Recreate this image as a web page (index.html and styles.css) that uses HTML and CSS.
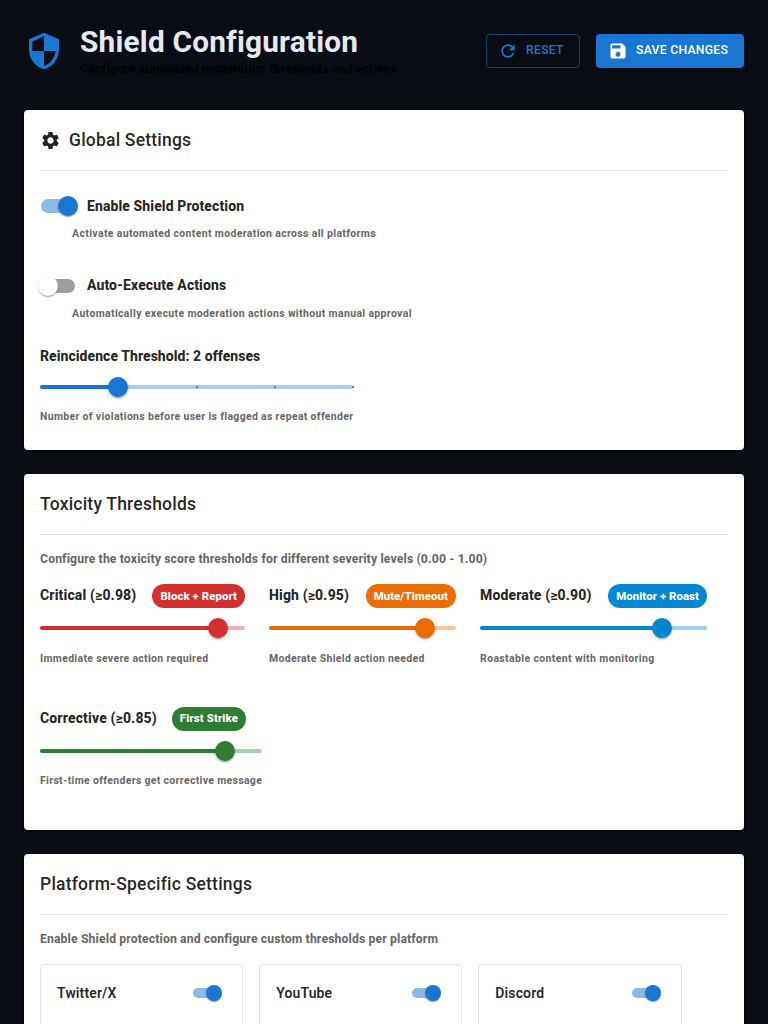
FILE: index.html
```html
<!DOCTYPE html>
<html lang="en">
<head>
<meta charset="utf-8">
<title>Shield Configuration</title>
<link rel="stylesheet" href="styles.css">
</head>
<body>
<main class="page">
  <header class="page-header">
    <div class="brand">
      <svg class="brand-icon" viewBox="0 0 24 24"><path d="M12 1 3 5v6c0 5.55 3.84 10.74 9 12 5.16-1.26 9-6.45 9-12V5l-9-4zm0 10.99h7c-.53 4.12-3.28 7.79-7 8.94V12H5V6.3l7-3.11v8.8z"/></svg>
      <div>
        <h1 class="title">Shield Configuration</h1>
        <p class="subtitle">Configure automated moderation thresholds and actions</p>
      </div>
    </div>
    <div class="actions">
      <button class="btn btn-outlined"><svg class="btn-icon" viewBox="0 0 24 24"><path d="M17.65 6.35C16.2 4.9 14.21 4 12 4c-4.42 0-7.99 3.58-7.99 8s3.57 8 7.99 8c3.73 0 6.84-2.55 7.73-6h-2.08c-.82 2.33-3.04 4-5.65 4-3.31 0-6-2.69-6-6s2.69-6 6-6c1.66 0 3.14.69 4.22 1.78L13 11h7V4l-2.35 2.35z"/></svg><span>RESET</span></button>
      <button class="btn btn-filled"><svg class="btn-icon" viewBox="0 0 24 24"><path d="M17 3H5c-1.11 0-2 .9-2 2v14c0 1.1.89 2 2 2h14c1.1 0 2-.9 2-2V7l-4-4zm-5 16c-1.66 0-3-1.34-3-3s1.34-3 3-3 3 1.34 3 3-1.34 3-3 3zm3-10H5V5h10v4z"/></svg><span>SAVE CHANGES</span></button>
    </div>
  </header>

  <section class="card card-global">
    <h2 class="card-title"><svg class="gear" viewBox="0 0 24 24"><path d="M19.14 12.94c.04-.3.06-.61.06-.94 0-.32-.02-.64-.07-.94l2.03-1.58c.18-.14.23-.41.12-.61l-1.92-3.32c-.12-.22-.37-.29-.59-.22l-2.39.96c-.5-.38-1.03-.7-1.62-.94l-.36-2.54c-.04-.24-.24-.41-.48-.41h-3.84c-.24 0-.43.17-.47.41l-.36 2.54c-.59.24-1.13.57-1.62.94l-2.39-.96c-.22-.08-.47 0-.59.22L2.74 8.87c-.12.21-.08.47.12.61l2.03 1.58c-.05.3-.09.63-.09.94s.02.64.07.94l-2.03 1.58c-.18.14-.23.41-.12.61l1.92 3.32c.12.22.37.29.59.22l2.39-.96c.5.38 1.03.7 1.62.94l.36 2.54c.05.24.24.41.48.41h3.84c.24 0 .44-.17.47-.41l.36-2.54c.59-.24 1.13-.56 1.62-.94l2.39.96c.22.08.47 0 .59-.22l1.92-3.32c.12-.22.07-.47-.12-.61l-2.01-1.58zM12 15.6c-1.98 0-3.6-1.62-3.6-3.6s1.62-3.6 3.6-3.6 3.6 1.62 3.6 3.6-1.62 3.6-3.6 3.6z"/></svg><span>Global Settings</span></h2>
    <div class="card-body">
      <div class="setting">
        <label class="switch-row"><span class="switch on"><i class="track"></i><i class="thumb"></i></span><span class="label">Enable Shield Protection</span></label>
        <p class="caption indented">Activate automated content moderation across all platforms</p>
      </div>
      <div class="setting">
        <label class="switch-row"><span class="switch"><i class="track"></i><i class="thumb"></i></span><span class="label raised">Auto-Execute Actions</span></label>
        <p class="caption indented">Automatically execute moderation actions without manual approval</p>
      </div>
      <div class="reincidence">
        <p class="label">Reincidence Threshold: 2 offenses</p>
        <div class="slider blue" style="--value: 25%"><i class="rail"></i><i class="fill"></i><i class="mark" style="left: 50%"></i><i class="mark" style="left: 75%"></i><i class="mark" style="left: 100%"></i><i class="knob"></i></div>
        <p class="caption">Number of violations before user is flagged as repeat offender</p>
      </div>
    </div>
  </section>

  <section class="card card-toxicity">
    <h2 class="card-title"><span>Toxicity Thresholds</span></h2>
    <div class="card-body">
      <p class="intro">Configure the toxicity score thresholds for different severity levels (0.00 - 1.00)</p>
      <div class="thresholds">
        <div class="threshold red critical">
          <div class="threshold-head"><span class="label">Critical (≥0.98)</span><span class="chip">Block + Report</span></div>
          <div class="slider" style="--value: 86.67%"><i class="rail"></i><i class="fill"></i><i class="knob"></i></div>
          <p class="caption">Immediate severe action required</p>
        </div>
        <div class="threshold orange high">
          <div class="threshold-head"><span class="label">High (≥0.95)</span><span class="chip">Mute/Timeout</span></div>
          <div class="slider" style="--value: 83.33%"><i class="rail"></i><i class="fill"></i><i class="knob"></i></div>
          <p class="caption">Moderate Shield action needed</p>
        </div>
        <div class="threshold sky moderate">
          <div class="threshold-head"><span class="label">Moderate (≥0.90)</span><span class="chip">Monitor + Roast</span></div>
          <div class="slider" style="--value: 80%"><i class="rail"></i><i class="fill"></i><i class="knob"></i></div>
          <p class="caption">Roastable content with monitoring</p>
        </div>
        <div class="threshold green corrective">
          <div class="threshold-head"><span class="label">Corrective (≥0.85)</span><span class="chip">First Strike</span></div>
          <div class="slider" style="--value: 83.33%"><i class="rail"></i><i class="fill"></i><i class="knob"></i></div>
          <p class="caption">First-time offenders get corrective message</p>
        </div>
      </div>
    </div>
  </section>

  <section class="card card-platforms">
    <h2 class="card-title"><span>Platform-Specific Settings</span></h2>
    <div class="card-body">
      <p class="intro">Enable Shield protection and configure custom thresholds per platform</p>
      <div class="platforms">
        <div class="platform"><span class="platform-name">Twitter/X</span><span class="switch small on"><i class="track"></i><i class="thumb"></i></span></div>
        <div class="platform"><span class="platform-name">YouTube</span><span class="switch small on"><i class="track"></i><i class="thumb"></i></span></div>
        <div class="platform"><span class="platform-name">Discord</span><span class="switch small on"><i class="track"></i><i class="thumb"></i></span></div>
      </div>
    </div>
  </section>
</main>
</body>
</html>
```

FILE: styles.css
```css
* { box-sizing: border-box; }
html, body { height: 100%; }
body {
  margin: 0;
  overflow: hidden;
  background: #0a0d14;
  color: rgba(0, 0, 0, 0.87);
  font-family: Roboto, "Liberation Sans", sans-serif;
  font-size: 14px;
  -webkit-font-smoothing: antialiased;
}
h1, h2, p { margin: 0; }
svg { fill: currentColor; flex: none; }

.page { height: 1024px; overflow: hidden; padding: 24px 24px 0; display: flex; flex-direction: column; gap: 24px; }
.page-header { flex: none; height: 62px; display: flex; justify-content: space-between; align-items: flex-start; }
.brand { display: flex; gap: 16px; }
.brand-icon { width: 40px; height: 40px; margin-top: 7px; color: #1976d2; }
.title { height: 35px; line-height: 35px; font-size: 29.75px; font-weight: 700; letter-spacing: 0.00735em; color: #e6e9f2; white-space: nowrap; }
.subtitle { height: 20px; line-height: 20px; font-size: 12.25px; font-weight: 800; letter-spacing: 0.1px; white-space: nowrap; }
.actions { display: flex; gap: 16px; padding-top: 10px; }
.btn {
  height: 34px; display: flex; align-items: center; gap: 8px;
  padding: 0 16px; border: 0; border-radius: 4px;
  font: 500 12.25px/20px Roboto, sans-serif; letter-spacing: 0.25px; white-space: nowrap;
}
.btn span { position: relative; top: -1px; }
.btn-icon { width: 20px; height: 20px; margin-left: -4px; }
.btn-outlined { width: 94px; padding: 0 15px; border: 1px solid rgba(25, 118, 210, 0.5); background: transparent; color: #1976d2; }
.btn-filled { width: 148px; background: #1976d2; color: #fff; box-shadow: 0 3px 1px -2px rgba(0,0,0,.2), 0 2px 2px rgba(0,0,0,.14), 0 1px 5px rgba(0,0,0,.12); }

.card { background: #fff; border-radius: 4px; overflow: hidden; flex: none; box-shadow: 0 2px 1px -1px rgba(0,0,0,.2), 0 1px 1px rgba(0,0,0,.14), 0 1px 3px rgba(0,0,0,.12); }
.card-global { height: 340px; }
.card-toxicity { height: 356px; }
.card-platforms { height: 340px; }
.card-title {
  height: 61px; margin: 0 16px; border-bottom: 1px solid rgba(0,0,0,.12);
  display: flex; align-items: center; gap: 8px;
  font-size: 17.5px; line-height: 28px; font-weight: 500; letter-spacing: 0.21px;
}
.gear { width: 21px; height: 21px; }
.card-body { padding: 16px; }

.label { font-size: 14px; line-height: 21px; font-weight: 800; letter-spacing: 0.09px; white-space: nowrap; }
.caption { font-size: 10.5px; line-height: 17.43px; font-weight: 800; letter-spacing: 0.3px; color: rgba(0,0,0,.6); white-space: nowrap; }
.caption.indented { margin-left: 32px; letter-spacing: 0.335px; }
.setting { height: 79.6px; }
.switch-row { height: 38px; margin-left: -11px; display: flex; align-items: center; }

.switch { position: relative; flex: none; width: 58px; height: 38px; padding: 12px; --thumb: 20px; }
.track { display: block; width: 100%; height: 100%; border-radius: 7px; background: #000; opacity: .38; }
.thumb { position: absolute; left: 9px; top: 9px; width: var(--thumb); height: var(--thumb); border-radius: 50%; background: #fff; box-shadow: 0 2px 1px -1px rgba(0,0,0,.2), 0 1px 1px rgba(0,0,0,.14), 0 1px 3px rgba(0,0,0,.12); }
.switch.on .track { background: #1976d2; opacity: .5; }
.switch.on .thumb { left: 29px; background: #1976d2; }
.switch.small { width: 40px; height: 24px; padding: 7px; --thumb: 16px; }
.switch.small.on .thumb { left: 20px; top: 4px; }
.raised { margin-top: -1px; }

.reincidence { width: 313.4px; margin-top: -0.3px; }
.reincidence .label { letter-spacing: 0.04px; }
.slider { position: relative; height: 4px; color: var(--tone); }
.rail, .fill { position: absolute; left: 0; top: 0; height: 4px; border-radius: 2px; background: currentColor; }
.rail { width: 100%; opacity: .38; }
.fill { width: var(--value); }
.mark { position: absolute; top: 1px; width: 2px; height: 2px; margin-left: -1px; background: currentColor; opacity: .8; }
.knob { position: absolute; left: var(--value); top: -8px; width: 20px; height: 20px; margin-left: -10px; border-radius: 50%; background: currentColor; box-shadow: 0 3px 1px -2px rgba(0,0,0,.2), 0 2px 2px rgba(0,0,0,.14), 0 1px 5px rgba(0,0,0,.12); }
.reincidence .slider { margin: 17.9px 0 19.5px; }

.blue { --tone: #1976d2; }
.red { --tone: #d32f2f; }
.orange { --tone: #ed6c02; }
.sky { --tone: #0288d1; }
.green { --tone: #2e7d32; }

.intro { font-size: 12.25px; line-height: 17.5px; font-weight: 800; letter-spacing: 0.1px; color: rgba(0,0,0,.6); }
.thresholds { display: flex; flex-wrap: wrap; column-gap: 24px; margin-top: 15.9px; }
.threshold { height: 122.6px; }
.critical { width: 205px; }
.high { width: 187px; }
.moderate { width: 227px; }
.corrective { width: 222px; }
.moderate .caption { letter-spacing: 0.35px; }
.threshold-head { height: 24px; display: flex; align-items: center; justify-content: space-between; }
.corrective .threshold-head { width: 206px; }
.threshold-head .label { margin-top: -1px; letter-spacing: 0.14px; }
.threshold .slider { margin: 18px 0 19.6px; }
.threshold.corrective .slider { margin-bottom: 18.7px; }
.chip { height: 24px; padding: 0 8px; border-radius: 12px; background: var(--tone); color: #fff; font-size: 11.375px; line-height: 24px; font-weight: 800; letter-spacing: 0.09px; white-space: nowrap; }
.corrective .chip { line-height: 23px; letter-spacing: 0.14px; }

.platforms { display: grid; grid-template-columns: repeat(3, 1fr); gap: 16px; width: 641.5px; margin-top: 15.5px; }
.platform { height: 180px; padding: 16px; border: 1px solid rgba(0,0,0,.12); border-radius: 4px; display: flex; justify-content: space-between; align-items: flex-start; }
.platform-name { font-size: 14px; line-height: 24px; font-weight: 600; letter-spacing: 0.00938em; }
```
